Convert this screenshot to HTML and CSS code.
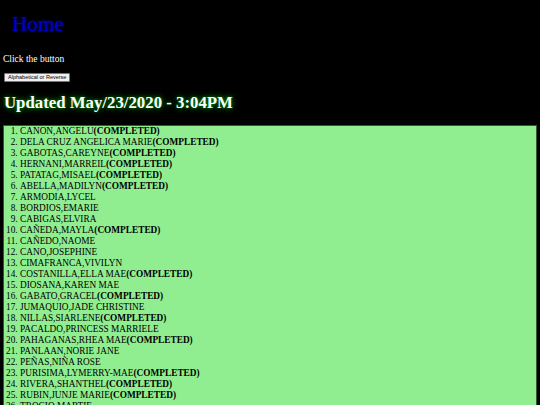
FILE: index.html
```html
<!DOCTYPE html>
<html>
<head>
<meta charset="utf-8">
<link rel="stylesheet" href="styles.css">
</head>
<body>
<h1 class="home">Home</h1>
<p class="lead">Click the button</p>
<button class="sort-btn">Alphabetical or Reverse</button>
<h2 class="updated">Updated May/23/2020 - 3:04PM</h2>
<div class="list-box">
<ol class="names">
<li>CANON,ANGELU<b>(COMPLETED)</b></li>
<li>DELA CRUZ ANGELICA MARIE<b>(COMPLETED)</b></li>
<li>GABOTAS,CAREYNE<b>(COMPLETED)</b></li>
<li>HERNANI,MARREIL<b>(COMPLETED)</b></li>
<li>PATATAG,MISAEL<b>(COMPLETED)</b></li>
<li>ABELLA,MADILYN<b>(COMPLETED)</b></li>
<li>ARMODIA,LYCEL</li>
<li>BORDIOS,EMARIE</li>
<li>CABIGAS,ELVIRA</li>
<li>CAÑEDA,MAYLA<b>(COMPLETED)</b></li>
<li>CAÑEDO,NAOME</li>
<li>CANO,JOSEPHINE</li>
<li>CIMAFRANCA,VIVILYN</li>
<li>COSTANILLA,ELLA MAE<b>(COMPLETED)</b></li>
<li>DIOSANA,KAREN MAE</li>
<li>GABATO,GRACEL<b>(COMPLETED)</b></li>
<li>JUMAQUIO,JADE CHRISTINE</li>
<li>NILLAS,SIARLENE<b>(COMPLETED)</b></li>
<li>PACALDO,PRINCESS MARRIELE</li>
<li>PAHAGANAS,RHEA MAE<b>(COMPLETED)</b></li>
<li>PANLAAN,NORIE JANE</li>
<li>PEÑAS,NIÑA ROSE</li>
<li>PURISIMA,LYMERRY-MAE<b>(COMPLETED)</b></li>
<li>RIVERA,SHANTHEL<b>(COMPLETED)</b></li>
<li>RUBIN,JUNJE MARIE<b>(COMPLETED)</b></li>
<li>TROCIO,MARTIE</li>
<li>VILLARIN,JOANNA</li>
</ol>
</div>
</body>
</html>
```

FILE: styles.css
```css
html, body {
  background: #000;
}
body {
  margin: 0;
  padding: 0 3px;
  font-family: "Liberation Serif", "Times New Roman", serif;
  color: #fff;
}
.home {
  margin: 0;
  padding: 10px 0 0 9px;
  font-size: 21.2px;
  font-weight: normal;
  line-height: 28px;
  color: #0000c8;
  text-shadow: 0 0 3px #0000a0;
}
.lead {
  margin: 16px 0 0 0;
  font-size: 9.5px;
  line-height: 11px;
}
.sort-btn {
  display: block;
  margin: 8px 0 0 1px;
  padding: 0 3px;
  height: 9px;
  font-family: "Liberation Sans", Arial, sans-serif;
  font-size: 5.5px;
  line-height: 7px;
  background: #efefef;
  color: #000;
  border: 1px solid #767676;
  border-radius: 1px;
}
.updated {
  margin: 10px 0 0 1px;
  font-size: 16.8px;
  line-height: 22px;
  font-weight: bold;
  color: #fff;
  text-shadow: 0 0 6px #00a000, 0 0 3px #006000;
}
.list-box {
  margin-top: 11px;
  background: #90ee90;
  border: 1px solid #2e5e2e;
  padding: 0;
}
.names {
  margin: 0;
  padding: 0 0 0 16px;
  font-size: 9.3px;
  line-height: 11px;
  color: #000;
}
```
